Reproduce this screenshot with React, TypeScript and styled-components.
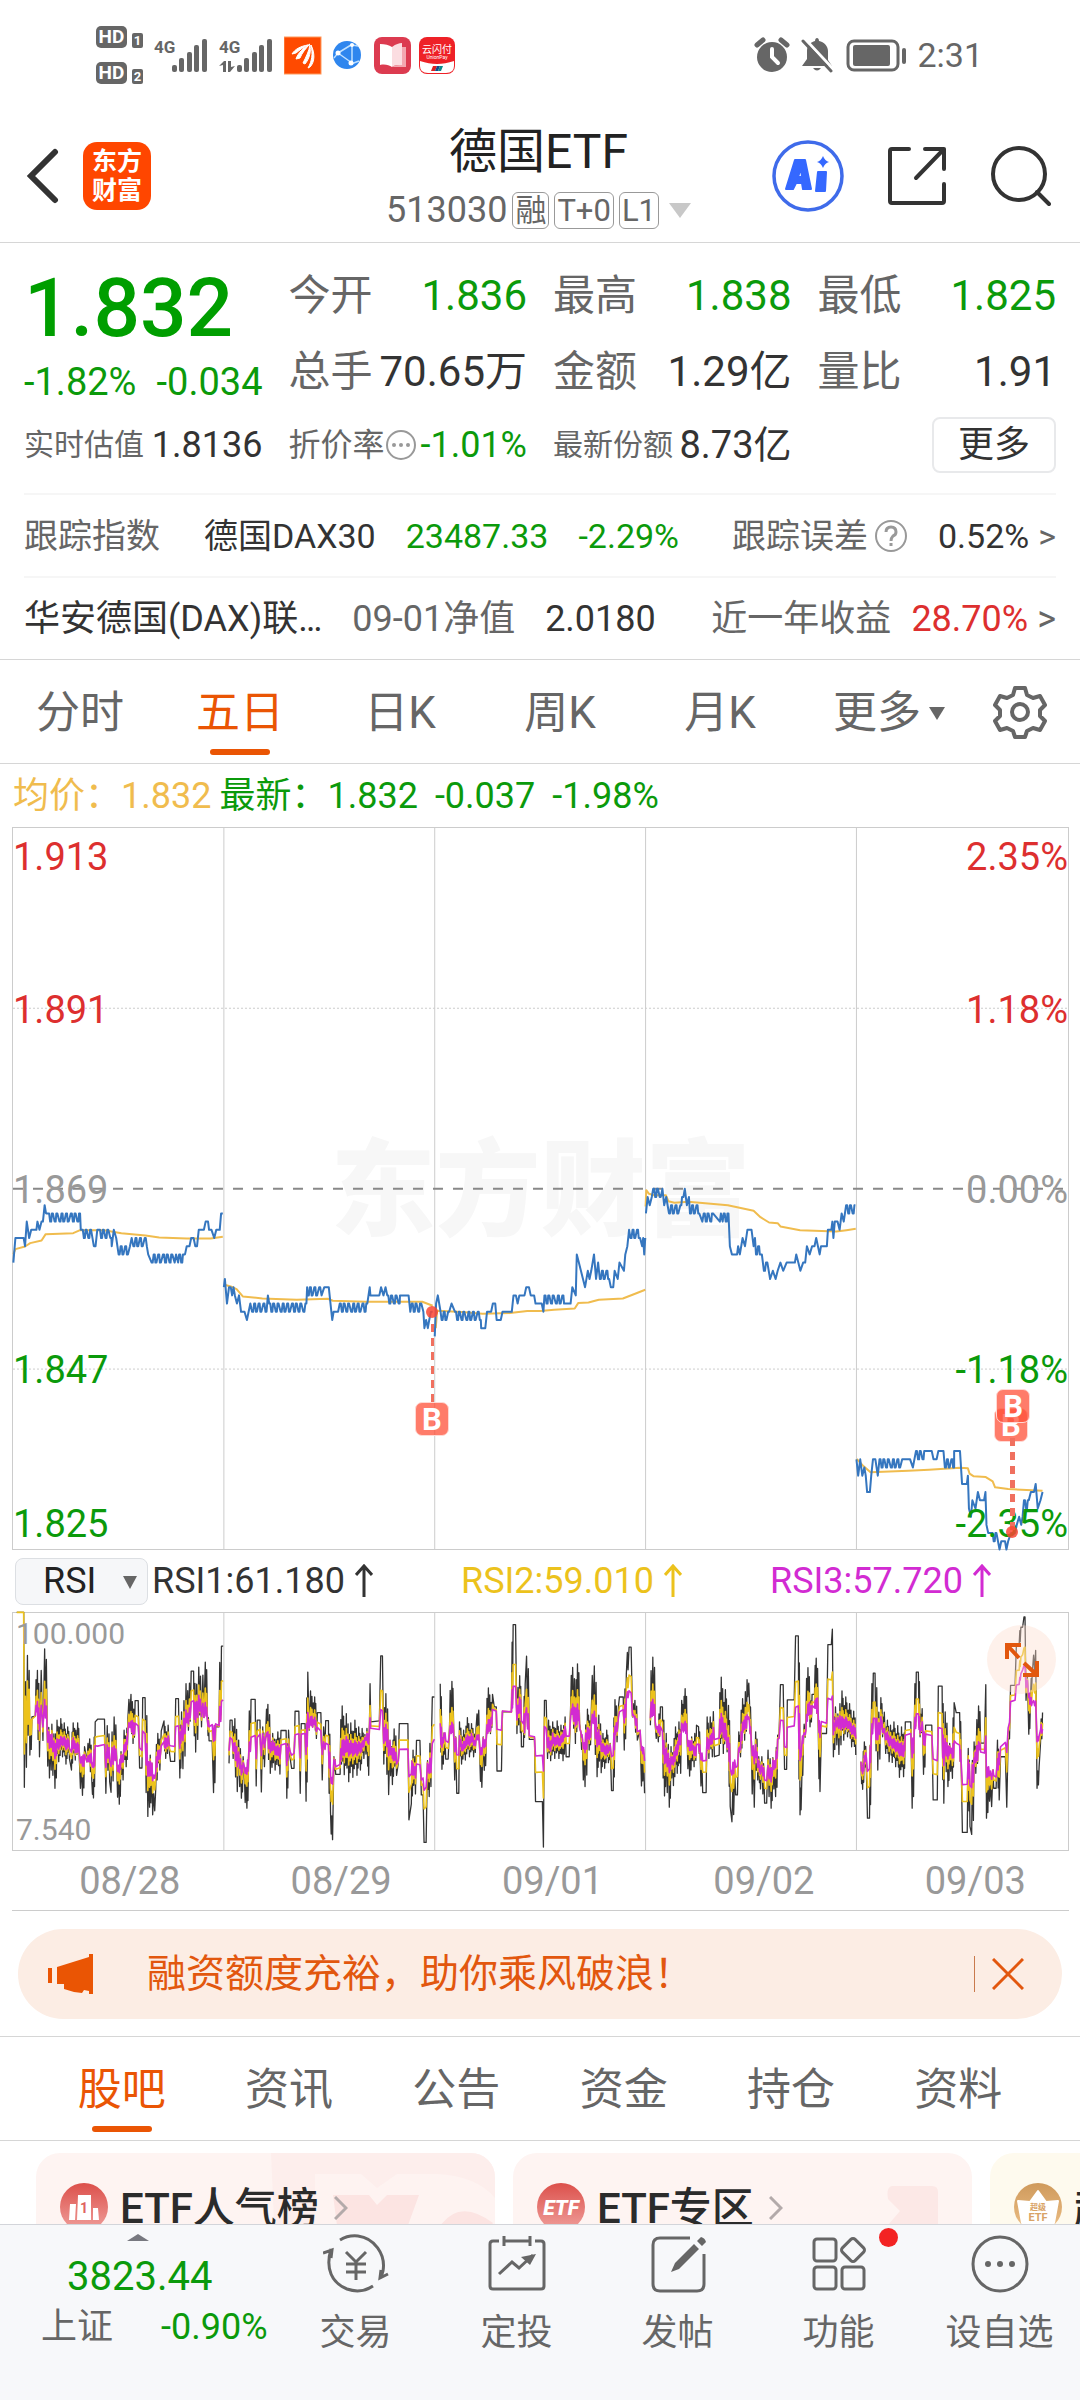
import React from 'react';
import styled, { createGlobalStyle } from 'styled-components';

const C = {
  green: '#0b9a0b',
  red: '#dd2f2f',
  orange: '#ea5504',
  text: '#333333',
  sub: '#666666',
  mute: '#999999',
  line: '#d6d6d6',
  grid: '#cccccc',
  avg: '#f0bc4e',
  blue: '#3576bf',
  rsi2: '#ecc21c',
  rsi3: '#d22bd2',
};

const Global = createGlobalStyle`
  * { box-sizing: border-box; }
  body { margin: 0; background: #fff; color: ${C.text}; font-family: Roboto, 'Noto Sans CJK SC', sans-serif; }
  button, select { font: inherit; color: inherit; background: none; border: 0; padding: 0; margin: 0; }
  a { color: inherit; text-decoration: none; }
  svg { display: block; flex: none; }
  h1, p { margin: 0; font-weight: 400; }
`;

const Screen = styled.div`
  display: flex;
  flex-direction: column;
  height: 100vh;
  overflow: hidden;
`;

/* ---------- status bar ---------- */

const StatusBar = styled.div`
  flex: none;
  height: 110px;
  padding: 0 97px 0 96px;
  display: flex;
  justify-content: space-between;
  color: ${C.sub};
`;
const StatusSide = styled.div<{ $gap: number }>`
  display: flex;
  align-items: center;
  gap: ${(p) => p.$gap}px;
`;
const Sims = styled.div`
  display: grid;
  gap: 14px;
`;
const Sim = styled.div`
  display: flex;
  align-items: flex-end;
  gap: 5px;
  color: #fff;
  font-weight: 700;
`;
const HdTag = styled.span`
  width: 31px;
  height: 22px;
  border-radius: 5px;
  background: ${C.sub};
  font-size: 19px;
  line-height: 22px;
  text-align: center;
`;
const SimNo = styled.span`
  width: 11px;
  height: 15px;
  border-radius: 2px;
  background: ${C.sub};
  font-size: 13px;
  line-height: 15px;
  text-align: center;
`;
const Clock = styled.span`
  font-size: 34px;
  line-height: 40px;
`;

const Signal = ({ data }: { data?: boolean }) => (
  <svg width="54" height="36" viewBox="0 0 54 36" fill={C.sub}>
    <text x="0" y="16" fontSize="17" fontWeight="700" fontFamily="Roboto">4G</text>
    <rect x="18" y="28" width="5" height="7" rx="2" />
    <rect x="25" y="21" width="5" height="14" rx="2" />
    <rect x="33" y="15" width="5" height="20" rx="2" />
    <rect x="40" y="8" width="5" height="27" rx="2" />
    <rect x="48" y="2" width="5" height="33" rx="2" />
    {data && <path d="M0 29l5-5h2v11H4v-7zM9 24h3v6l4-1-5 6H9z" />}
  </svg>
);

const StatusIcons = () => (
  <svg width="172" height="40" viewBox="0 0 172 40">
    <rect x="0" y="2" width="37" height="37" fill="#ff4a00" stroke="#ff9a5c" />
    <path d="M8 19c3-5 9-8 16-9-5 2-8 5-12 8zM12 24c2-6 7-11 14-15-4 4-8 9-10 14zM19 28c3-6 6-12 7-18 1 6 0 13-5 19zM24 33c4-7 5-14 3-23 4 8 4 17-1 22z" fill="#fff" stroke="#fff" strokeWidth="1" />
    <circle cx="63" cy="20" r="14" fill="#2f86ee" />
    <path d="M54 18L67 10M54 18L68 28M68 10V29M50 23c2-2 3-4 4-6M68 10l6 1M67 29l8-3" stroke="#bfe0ff" strokeWidth="1.5" fill="none" />
    <circle cx="54" cy="18" r="2.5" fill="#fff" />
    <circle cx="68" cy="10" r="2" fill="#fff" />
    <circle cx="67" cy="28" r="2.5" fill="#fff" />
    <rect x="90" y="2" width="37" height="37" rx="8" fill="#dc3b50" />
    <path d="M96 9c5 0 9 1 12 3v20c-3-2-7-3-12-2z" fill="#fff" />
    <path d="M108 12c4-3 7-4 10-4v22c-4 0-7 0-10 2z" fill="#fbdde1" />
    <path d="M118 12h4v20h-14c3-2 6-2 10-2z" fill="#f3a7b0" />
    <rect x="135" y="2" width="36" height="37" rx="8" fill="#ee2127" />
    <path d="M136 26c12 4 22 4 34 0v5q0 7-8 7h-18q-8 0-8-7z" fill="#fff" />
    <path d="M149 31h4l-2 5h-4z" fill="#d22" />
    <path d="M153 31h3l-2 5h-3z" fill="#124a8a" />
    <path d="M156 31h3l-2 5h-3z" fill="#0a8a8a" />
    <text x="153" y="18" fontSize="10" fill="#fff" textAnchor="middle" fontFamily="Noto Sans CJK SC">云闪付</text>
    <text x="153" y="24" fontSize="5" fill="#fff" textAnchor="middle" fontFamily="Roboto">UnionPay</text>
  </svg>
);

/* ---------- header ---------- */

const Header = styled.header`
  flex: none;
  height: 133px;
  border-bottom: 1px solid ${C.line};
  padding: 0 29px 0 26px;
  display: grid;
  grid-template-columns: 1fr auto 1fr;
  align-items: center;
`;
const HeadSide = styled.div<{ $end?: boolean }>`
  display: flex;
  align-items: center;
  gap: ${(p) => (p.$end ? 42 : 24)}px;
  justify-content: ${(p) => (p.$end ? 'flex-end' : 'flex-start')};
`;
const IconButton = styled.button`
  display: flex;
  cursor: pointer;
`;
const Logo = styled.a`
  width: 68px;
  height: 68px;
  border-radius: 14px;
  background: #ff4600;
  color: #fff;
  display: flex;
  flex-direction: column;
  align-items: center;
  justify-content: center;
  font-size: 25px;
  line-height: 29px;
  font-weight: 700;
`;
const HeadCentre = styled.div`
  display: flex;
  flex-direction: column;
  align-items: center;
  gap: 8px;
`;
const Title = styled.h1`
  font-size: 48px;
  line-height: 60px;
  color: #222;
`;
const CodeLine = styled.div`
  display: flex;
  align-items: center;
  gap: 5px;
  font-size: 36px;
  line-height: 40px;
  color: ${C.sub};
`;
const Tag = styled.span`
  height: 37px;
  padding: 0 2px;
  border: 1px solid #999;
  border-radius: 6px;
  font-size: 31px;
  line-height: 35px;
`;

/* ---------- quote ---------- */

const Main = styled.main`
  flex: 1;
  min-height: 0;
  overflow: hidden;
`;
const Quote = styled.section`
  padding: 15px 24px 0;
  border-bottom: 1px solid ${C.line};
`;
const QuoteGrid = styled.div`
  display: grid;
  grid-template-columns: repeat(4, minmax(0, 1fr));
  grid-template-rows: 76px 75px 72px;
  column-gap: 26px;
  padding-bottom: 12px;
`;
const PriceCell = styled.div`
  grid-row: span 2;
  padding-top: 8px;
  color: ${C.green};
`;
const Price = styled.div`
  font-size: 82px;
  line-height: 84px;
  font-weight: 500;
  color: #009e00;
`;
const Change = styled.div`
  display: flex;
  justify-content: space-between;
  font-size: 38px;
  line-height: 64px;
`;
const Stat = styled.div`
  display: flex;
  align-items: center;
  justify-content: space-between;
  white-space: nowrap;
`;
const Label = styled.span<{ $size: number }>`
  display: flex;
  align-items: center;
  gap: 1px;
  color: ${C.sub};
  font-size: ${(p) => p.$size}px;
  line-height: 56px;
`;
const Value = styled.span<{ $size: number; $color?: string }>`
  color: ${(p) => p.$color || C.text};
  font-size: ${(p) => p.$size}px;
  line-height: 56px;
`;
const MoreButton = styled.button`
  align-self: center;
  justify-self: end;
  width: 124px;
  height: 56px;
  border: 2px solid #e8e9eb;
  border-radius: 8px;
  font-size: 36px;
  line-height: 48px;
  cursor: pointer;
`;
const LinkRow = styled.a<{ $size: number }>`
  display: flex;
  align-items: center;
  justify-content: space-between;
  height: 83px;
  border-top: 2px solid #f6f6f6;
  font-size: ${(p) => p.$size}px;
  line-height: 56px;
  white-space: nowrap;
`;
const RowGroup = styled.span<{ $gap: number }>`
  display: flex;
  align-items: center;
  gap: ${(p) => p.$gap}px;
`;
const Tint = styled.span<{ $color: string; $min?: number }>`
  color: ${(p) => p.$color};
  min-width: ${(p) => p.$min || 0}px;
`;

/* ---------- tabs ---------- */

const Tabs = styled.nav<{ $pad: number; $cols: string }>`
  display: grid;
  grid-template-columns: ${(p) => p.$cols};
  height: 104px;
  padding: 0 ${(p) => p.$pad}px;
  border-bottom: 1px solid ${C.line};
`;
const Tab = styled.button<{ $on?: boolean; $menu?: boolean }>`
  display: flex;
  align-items: center;
  justify-content: center;
  gap: 8px;
  padding: 3px 0 0 ${(p) => (p.$menu ? 18 : 0)}px;
  font-size: 44px;
  line-height: 64px;
  color: ${(p) => (p.$on ? C.orange : C.sub)};
  position: relative;
  cursor: pointer;
  &::after {
    content: '';
    display: ${(p) => (p.$on ? 'block' : 'none')};
    position: absolute;
    left: 50%;
    bottom: 8px;
    width: 60px;
    height: 6px;
    margin-left: -30px;
    border-radius: 3px;
    background: ${C.orange};
  }
`;
const GearButton = styled(IconButton)`
  align-items: center;
  justify-content: center;
`;
const Legend = styled.div`
  display: flex;
  align-items: center;
  gap: 17px;
  height: 63px;
  padding-left: 13px;
  font-size: 36px;
  line-height: 56px;
  color: ${C.green};
`;
const LegendPair = styled.span`
  display: flex;
  gap: 8px;
`;

/* ---------- charts ---------- */

const Charts = styled.section`
  margin: 0 11px 0 12px;
`;
const Plot = styled.div<{ $height: number }>`
  position: relative;
  height: ${(p) => p.$height}px;
  border: 1px solid ${C.grid};
`;
const PlotLayer = styled.div`
  position: relative;
  height: 100%;
`;
const PlotSvg = styled.svg`
  width: 100%;
  height: 100%;
  overflow: visible;
`;
const AxisText = styled.span<{ $y: number; $color: string; $right?: boolean; $small?: boolean }>`
  position: absolute;
  top: ${(p) => p.$y - 24}px;
  ${(p) => (p.$right ? 'right: 0;' : p.$small ? 'left: 3px;' : 'left: 0;')}
  color: ${(p) => p.$color};
  font-size: ${(p) => (p.$small ? 30 : 38)}px;
  line-height: 48px;
`;
const Watermark = styled.span`
  position: absolute;
  left: 0;
  right: 0;
  top: 304px;
  text-align: center;
  font-size: 105px;
  line-height: 120px;
  font-weight: 900;
  color: #f7f7f7;
`;
const Badge = styled.span<{ $left: number; $top: number }>`
  position: absolute;
  left: ${(p) => p.$left}%;
  top: ${(p) => p.$top}px;
  width: 34px;
  height: 34px;
  margin-left: -17px;
  border: 1px solid #ffd9d4;
  border-radius: 7px;
  background: rgba(255, 80, 56, 0.75);
  color: #fff;
  font-size: 31px;
  line-height: 33px;
  font-weight: 700;
  text-align: center;
`;
const Stem = styled.span<{ $left: number; $top: number; $height: number; $w: number }>`
  position: absolute;
  left: ${(p) => p.$left}%;
  top: ${(p) => p.$top}px;
  height: ${(p) => p.$height}px;
  width: ${(p) => p.$w}px;
  margin-left: ${(p) => -Math.floor(p.$w / 2)}px;
  background: repeating-linear-gradient(to bottom, #f0705f 0 8px, transparent 8px 14px);
`;
const Dot = styled.span<{ $left: number; $top: number }>`
  position: absolute;
  left: ${(p) => p.$left}%;
  top: ${(p) => p.$top - 6}px;
  width: 12px;
  height: 12px;
  margin-left: -6px;
  border-radius: 50%;
  background: rgba(250, 70, 50, 0.85);
`;
const RsiBar = styled.div`
  display: flex;
  align-items: center;
  height: 62px;
  padding-left: 3px;
`;
const SelectBox = styled.label`
  display: flex;
  align-items: center;
  position: relative;
  flex: none;
  width: 133px;
  height: 47px;
  margin-right: 4px;
  border: 1px solid #dcdfe3;
  border-radius: 8px;
  background: #f6f7f9;
  select {
    appearance: none;
    width: 100%;
    height: 45px;
    padding-left: 27px;
    font-size: 36px;
    line-height: 45px;
    color: #222;
  }
  svg {
    position: absolute;
    right: 10px;
    top: 17px;
    pointer-events: none;
  }
`;
const RsiItem = styled.span<{ $color: string }>`
  display: flex;
  align-items: center;
  gap: 10px;
  flex: none;
  width: 309px;
  font-size: 36px;
  line-height: 48px;
  color: ${(p) => p.$color};
  &:last-child {
    width: auto;
  }
`;
const Expand = styled.button`
  position: absolute;
  right: 12px;
  top: 12px;
  width: 69px;
  height: 69px;
  border-radius: 50%;
  background: rgba(252, 220, 205, 0.4);
  display: flex;
  align-items: center;
  justify-content: center;
`;
const Dates = styled.div`
  display: flex;
  height: 60px;
  border-bottom: 1px solid ${C.grid};
  font-size: 38px;
  line-height: 60px;
  color: ${C.mute};
  span {
    flex: 1;
    padding-left: 24px;
    text-align: center;
  }
`;

// Plot space: 3067 units across five sessions, three units to a vertical pixel.
const DAYS = [648, 1261, 1874, 2487];
const LEFT = 35;
const WIDTH = 3067;

// A price run is either "x,level" (ticks below the previous close) or
// "x0-x1,a,b" for a stretch in which the price flickers between two ticks.
const PRICE_RUNS = [
  '36,9 38,8 42,6 66,6 70,7 75,4 82,6 88,5 103,5 106,4 112,5 118,4 122,4 127,2 131,3 137-230,3,4 232,5 235-265,5,6 270,7 275,7 280,5 285-320,5,6 322,7 328,5 335,6 342-370,8,7 375,7 380,6 385-418,7,6 424,7 428,8 438-502,9,8 505,9 509,8 515,9 518-530,8,9 535,8 540,7 548,7 553,6 560,6 565,7 570,7 575,5 590,5 595,4 602,4 605,5 612,5 620,6 626,5 636,5 640,3 645,3',
  '648,12 651,11 657,14 663,12 668,12 672,13 676,12 680,13 686,14 692,13 698,15 708,15 715,16 725,14 730-773,15,14 776,13 780-886,14,15 890,12 892-930,13,12 932,13 940,12 953,12 958,14 963,16 967,15 980,15 985-1068,14,15 1072,12 1074,13 1100,13 1105,12 1112,13 1118,12 1123-1158,13,14 1160,13 1185,13 1190,15 1194-1218,14,15 1222,14 1228,15 1231,17 1236,16 1241,17 1245,16 1250,15 1255,15',
  '1261,18 1265,14 1270,13 1278,15 1281-1302,16,15 1310,14 1320-1392,15,16 1396,17 1408,17 1413,15 1425,15 1430,14 1437,14 1441,16 1453,16 1458,15 1485,15 1490,13 1497,13 1502,14 1507,13 1522,13 1527,12 1535,12 1540,13 1550,13 1554,14 1572,14 1577,15 1580-1640,13,14 1656,14 1661,12 1671,13 1674,8 1680,9 1686,10 1692,11 1698,12 1706,10 1711,11 1716,10 1724,8 1730,11 1736,9 1741-1766,11,10 1773,12 1780,12 1784,10 1793,11 1798,9 1811,10 1815,8 1821,7 1826,5 1830-1854,6,5 1858,6 1864,7 1867,6 1870,8 1873,6',
  '1875,3 1880,1 1886,2 1892,1 1896-1918,0,1 1923,0 1928,2 1934,1 1938,2 1942-1976,3,2 1980,1 1984,1 1988,0 1994,2 2000,1 2003-2034,3,2 2039,4 2043-2070,3,4 2090,4 2093,3 2098,4 2101-2114,3,4 2115,3 2119,7 2125,8 2140,8 2143,7 2148,8 2156,6 2163,7 2170,5 2182,5 2188,7 2192,6 2195-2208,8,7 2212,8 2218-2226,10,9 2228,9 2236,11 2244,10 2252,11 2258,10 2266,9 2274,10 2284,9 2308,9 2312,8 2318,9 2324,10 2332,9 2338,9 2343,7 2351,8 2358,7 2365,7 2370,6 2380,8 2384,7 2401,7 2404,5 2414,5 2417,4 2420,6 2424,4 2432,4 2438,5 2444,3 2450,4 2457-2485,2,3',
  '2487,33 2492,35 2498,33 2504,35 2510,34 2514,35 2518,37 2526,37 2530,35 2535,33 2542,33 2549,35 2554-2623,33,34 2628,33 2643,33 2651,34 2660-2690,32,33 2692,32 2706,32 2711,33 2720,33 2725,32 2740,32 2744-2768,34,33 2771,32 2788,32 2794,36 2808,36 2811,35 2814,39 2820,40 2824,38 2833,39 2840,37 2846,38 2858,38 2862,37 2865,41 2870,42 2880-2898,42,43 2903,44 2908,43 2919,43 2923,44 2928,43 2936,42 2948,42 2953,41 2960,40 2966,41 2970,40 2974-2990,38,39 2994,37 3003,37 3008,36 3014,39 3022,38 3028,37',
];

const AVG_LINES = [
  '36,403 42,388 70,380 85,370 118,362 130,343 210,340 230,331 300,331 350,340 420,347 460,353 540,356 610,356 645,351',
  '650,495 668,500 685,508 703,530 760,536 860,540 950,537 965,543 1060,546 1225,546 1255,558',
  '1264,625 1268,573 1340,577 1400,582 1480,580 1530,574 1568,574 1608,570 1668,566 1678,550 1708,548 1738,540 1808,536 1838,524 1873,510',
  '1874,260 1876,211 1884,222 1898,226 1933,226 1940,244 1958,249 1998,246 2113,256 2188,273 2208,292 2233,308 2258,310 2266,320 2323,331 2428,335 2458,331 2485,327',
  '2488,1018 2508,1040 2528,1058 2638,1053 2698,1050 2788,1044 2811,1046 2816,1062 2828,1070 2863,1072 2883,1085 2890,1103 2928,1108 3028,1113',
];

const tickY = (level: number) => 207 + level * 24.6;

function priceLine(runs: string): string {
  const out: string[] = [];
  runs.split(' ').forEach((run) => {
    const [span, a, b] = run.split(',');
    if (b === undefined) {
      out.push(`${span},${tickY(+a)}`);
      return;
    }
    const [from, to] = span.split('-').map(Number);
    let high = true;
    let i = 0;
    for (let x = from; x <= to; x += [6, 5, 8, 5, 9][i++ % 5]) {
      const y = tickY(high ? +a : +b);
      out.push(`${x},${y}`, `${x + 3},${y}`);
      high = !high;
    }
  });
  return out.join(' ');
}

const RSI_LINES = [
  '46,215 66,215 68,742 77,345 84,645 90,530 100,528 106,390 112,650 127,325 134,535 141,714 148,552 157,745 163,540 168,665 174,535 179,650 184,548 189,672 194,560 199,655 205,690 210,548 216,660 223,548 228,660 237,766 243,620 250,665 258,596 264,720 269,774 274,545 281,537 301,537 305,760 309,556 316,725 320,757 329,530 337,690 344,793 349,635 355,720 358,570 364,680 369,535 378,462 384,610 390,481 399,481 403,684 410,684 412,472 419,472 427,830 434,645 441,825 450,745 456,580 462,690 466,572 474,542 479,655 486,555 490,640 493,664 505,664 508,475 516,475 520,714 525,515 529,686 538,430 545,570 553,392 560,392 566,636 575,380 583,560 594,365 600,520 605,602 614,602 618,758 624,560 634,560 641,317 646,317',
  '663,670 666,540 672,540 675,655 680,535 687,755 691,600 699,775 704,650 708,720 715,805 720,650 727,477 739,477 742,738 745,540 753,540 757,756 761,560 766,680 770,565 776,492 783,700 790,580 797,690 805,575 811,702 814,571 829,571 831,775 836,570 840,650 845,685 852,685 855,513 866,513 870,760 873,550 884,550 887,784 892,395 896,570 900,452 906,560 912,470 917,595 920,517 930,517 934,720 938,560 942,620 944,541 952,541 958,815 964,900 968,650 973,703 986,703 992,497 998,704 1004,520 1011,725 1017,548 1023,712 1029,540 1035,706 1040,560 1045,690 1050,565 1055,655 1064,565 1069,706 1073,430 1075,545 1100,542 1104,346 1109,346 1113,672 1119,460 1127,764 1131,600 1138,734 1143,566 1150,706 1155,670 1158,550 1183,550 1186,840 1193,792 1198,630 1205,762 1208,601 1218,601 1222,765 1227,765 1230,908 1236,908 1240,662 1245,770 1252,570 1254,470 1260,470',
  '1277,430 1282,688 1288,580 1293,657 1300,657 1304,560 1311,423 1316,560 1325,760 1331,760 1333,545 1339,672 1345,570 1350,660 1356,532 1362,650 1368,550 1374,650 1381,565 1389,510 1392,650 1398,742 1402,590 1405,691 1411,600 1417,443 1423,580 1429,462 1434,500 1440,500 1442,693 1455,693 1458,515 1484,515 1489,252 1496,252 1500,580 1508,406 1513,620 1519,620 1524,430 1528,347 1536,598 1551,598 1554,785 1574,785 1577,922 1580,480 1585,480 1589,655 1592,540 1598,662 1604,545 1610,655 1617,542 1622,655 1628,555 1634,662 1640,530 1643,650 1652,650 1656,500 1662,381 1670,610 1676,370 1682,550 1686,580 1691,640 1698,740 1705,507 1710,630 1716,520 1725,376 1733,710 1738,525 1745,698 1750,580 1755,685 1761,570 1766,668 1771,610 1775,752 1780,752 1785,478 1791,605 1795,500 1798,470 1809,470 1812,630 1818,400 1826,320 1832,320 1836,530 1843,480 1850,600 1858,570 1862,738 1868,640 1871,760',
  '1888,555 1895,350 1902,555 1911,605 1917,500 1923,500 1929,768 1934,580 1943,802 1948,620 1955,737 1961,560 1966,700 1971,545 1976,700 1979,480 1984,560 1989,445 1995,600 2002,708 2008,590 2015,680 2022,555 2028,560 2033,660 2040,758 2050,758 2053,530 2058,655 2062,530 2068,650 2071,514 2074,650 2088,645 2094,410 2100,640 2106,448 2111,635 2115,495 2120,800 2125,846 2133,700 2136,765 2141,765 2145,575 2150,650 2156,475 2162,600 2169,418 2176,482 2181,600 2190,802 2194,575 2200,720 2203,650 2208,747 2212,650 2220,790 2226,790 2230,630 2239,805 2244,653 2252,770 2258,585 2262,585 2266,433 2274,433 2278,688 2284,688 2286,479 2306,479 2310,286 2318,286 2323,825 2328,725 2333,600 2340,540 2346,382 2352,560 2358,462 2365,462 2370,353 2376,560 2381,755 2385,580 2400,580 2404,312 2414,312 2417,266 2420,650 2426,500 2436,643 2445,452 2450,600 2456,470 2461,590 2467,490 2473,620 2479,513 2485,645',
  '2500,665 2505,748 2510,605 2516,700 2519,835 2525,835 2530,560 2536,398 2541,398 2549,690 2558,472 2563,590 2568,516 2572,640 2577,540 2582,665 2586,555 2591,667 2596,545 2601,680 2607,556 2612,712 2618,560 2624,710 2629,545 2645,545 2649,805 2655,570 2661,395 2667,395 2672,590 2678,505 2682,703 2688,555 2706,555 2710,780 2722,780 2725,437 2736,437 2741,790 2745,515 2753,740 2758,610 2766,715 2771,487 2777,517 2787,517 2792,700 2795,878 2809,878 2812,625 2817,860 2822,884 2829,605 2834,700 2842,497 2848,609 2859,609 2863,433 2865,835 2871,720 2880,800 2884,690 2886,745 2893,745 2897,600 2902,780 2906,650 2920,650 2924,802 2928,596 2932,596 2935,435 2948,435 2952,312 2960,312 2965,260 2970,260 2974,229 2977,229 2980,480 2984,410 2988,582 2993,470 2998,400 3008,330 3012,745 3018,680 3022,610 3028,517',
];

// Adds the minute-by-minute reversals between two turning points.
function flicker(pts: number[][]): number[][] {
  return pts.flatMap(([x, y], i) => {
    const next = pts[i + 1];
    if (!next || next[0] - x < 5 || Math.abs(next[1] - y) < 50) return [[x, y]];
    const gap = next[0] - x;
    const dy = next[1] - y;
    return [[x, y], [x + gap * 0.35, y + dy * 0.8], [x + gap * 0.65, y + dy * 0.15]];
  });
}

// Slower RSI periods keep the fast line's rhythm but pull it towards its local mean.
function rsiLine(line: string, k: number, from = 0): string {
  const pts = flicker(line.split(' ').map((p) => p.split(',').map(Number)));
  return pts
    .map(([x, y], i) => {
      const near = pts.slice(Math.max(0, i - 9), i + 10);
      const mean = near.reduce((s, p) => s + p[1], 0) / near.length;
      const base = mean * 0.8 + 610 * 0.2;
      return [x, x < 67 ? y : base + (y - base) * k];
    })
    .filter(([x]) => x >= from)
    .map(([x, y]) => `${x.toFixed(0)},${y.toFixed(0)}`)
    .join(' ');
}

const Line = ({ points, color, w = 1 }: { points: string; color: string; w?: number }) => (
  <polyline points={points} fill="none" stroke={color} strokeWidth={w} strokeLinejoin="round" vectorEffect="non-scaling-stroke" />
);

const PriceChart = () => (
  <PlotSvg viewBox={`${LEFT} -876 ${WIDTH} 2164`} preserveAspectRatio="none">
    {DAYS.map((x) => (
      <line key={x} x1={x} x2={x} y1="-876" y2="1288" stroke={C.grid} vectorEffect="non-scaling-stroke" />
    ))}
    {[-335, 748].map((y) => (
      <line key={y} x1={LEFT} x2={LEFT + WIDTH} y1={y} y2={y} stroke="#cccccc" strokeDasharray="2 2" vectorEffect="non-scaling-stroke" />
    ))}
    <line x1={LEFT} x2={LEFT + WIDTH} y1="207" y2="207" stroke="#888" strokeWidth="2" strokeDasharray="10 10" vectorEffect="non-scaling-stroke" />
    {AVG_LINES.map((p) => <Line key={p} points={p} color={C.avg} w={2} />)}
    {PRICE_RUNS.map((p) => <Line key={p} points={priceLine(p)} color={C.blue} w={2} />)}
  </PlotSvg>
);

const RsiChart = () => (
  <PlotSvg viewBox={`${LEFT} 217 ${WIDTH} 714`} preserveAspectRatio="none">
    {DAYS.map((x) => (
      <line key={x} x1={x} x2={x} y1="217" y2="931" stroke={C.grid} vectorEffect="non-scaling-stroke" />
    ))}
    {RSI_LINES.map((p) => <Line key={p} points={rsiLine(p, 1)} color="#333" w={1.3} />)}
    {RSI_LINES.map((p) => <Line key={p} points={rsiLine(p, 0.55)} color={C.rsi2} w={1.6} />)}
    {RSI_LINES.map((p, i) => <Line key={p} points={rsiLine(p, 0.3, i ? 0 : 95)} color={C.rsi3} w={1.6} />)}
  </PlotSvg>
);

const UpArrow = () => (
  <svg width="18" height="34" viewBox="0 0 18 34" fill="none" stroke="currentColor" strokeWidth="3">
    <path d="M9 33V3M1 11l8-9 8 9" />
  </svg>
);

/* ---------- banner, cards ---------- */

const Banner = styled.div`
  display: flex;
  align-items: center;
  height: 90px;
  margin: 18px 18px 17px;
  padding: 0 38px 0 30px;
  border-radius: 45px;
  background: #fcede4;
  color: #e2570e;
  font-size: 39px;
  line-height: 56px;
`;
const BannerText = styled.a`
  flex: 1;
  margin-left: 53px;
`;
const BannerRule = styled.span`
  width: 1px;
  height: 36px;
  margin-right: 17px;
  background: #c97a4c;
`;
const BannerWrap = styled.div`
  display: flow-root;
  border-bottom: 1px solid ${C.line};
`;
const Cards = styled.div`
  display: flex;
  gap: 18px;
  padding: 12px 0 0 36px;
  overflow: hidden;
`;
const Card = styled.a<{ $bg: string }>`
  position: relative;
  flex: none;
  width: 459px;
  height: 180px;
  padding: 30px 0 0 24px;
  border-radius: 24px;
  overflow: hidden;
  background: ${(p) => p.$bg};
  display: flex;
  align-items: flex-start;
`;
const CardTitle = styled.span`
  position: relative;
  margin: 0 15px 0 12px;
  font-size: 42px;
  line-height: 52px;
  font-weight: 500;
  color: #2b2b2b;
  white-space: nowrap;
`;
const CardArt = styled.svg`
  position: absolute;
  right: 0;
  top: 0;
`;
const CardIcon = styled.svg`
  position: relative;
`;
const CardChevron = styled.svg`
  position: relative;
  margin-top: 13px;
`;

const Chevron = () => (
  <CardChevron width="14" height="24" viewBox="0 0 14 24" fill="none" stroke="#b3aaaa" strokeWidth="3">
    <path d="M1 1l11 11L1 23" />
  </CardChevron>
);

/* ---------- bottom bar ---------- */

const BottomBar = styled.nav`
  flex: none;
  display: grid;
  grid-template-columns: 275fr repeat(5, 161fr);
  height: 176px;
  border-top: 1px solid #d3d5da;
  background: #f7f8fa;
  color: ${C.sub};
`;
const IndexBox = styled.a`
  display: flex;
  flex-direction: column;
  padding: 9px 0 0 41px;
`;
const IndexValue = styled.span`
  padding-left: 26px;
  font-size: 40px;
  line-height: 48px;
  margin-top: 12px;
  color: ${C.green};
`;
const IndexLine = styled.span`
  display: flex;
  gap: 48px;
  font-size: 36px;
  line-height: 52px;
`;
const Action = styled.button`
  display: flex;
  flex-direction: column;
  align-items: center;
  position: relative;
  padding-top: 7px;
  font-size: 36px;
  line-height: 52px;
  gap: 13px;
  cursor: pointer;
`;
const RedDot = styled.i`
  position: absolute;
  left: 50%;
  top: 3px;
  width: 19px;
  height: 19px;
  margin-left: 40px;
  border-radius: 50%;
  background: #f32323;
`;

const ActionSvg = ({ children }: { children: React.ReactNode }) => (
  <svg width="66" height="62" viewBox="0 0 66 62" fill="none" stroke={C.sub} strokeWidth="3">{children}</svg>
);

const Triangle = ({ w, h, color }: { w: number; h: number; color: string }) => (
  <svg width={w} height={h} viewBox="0 0 10 10" preserveAspectRatio="none" fill={color}><path d="M0 0h10L5 10z" /></svg>
);

const FoldButton = styled(IconButton)`
  margin-left: 5px;
`;

const STATS: [string, string, string?][] = [
  ['今开', '1.836', C.green],
  ['最高', '1.838', C.green],
  ['最低', '1.825', C.green],
  ['总手', '70.65万'],
  ['金额', '1.29亿'],
  ['量比', '1.91'],
];

const AXIS: [number, string, string, string][] = [
  [29, '1.913', '2.35%', C.red],
  [182, '1.891', '1.18%', C.red],
  [362, '1.869', '0.00%', C.mute],
  [542, '1.847', '-1.18%', C.green],
  [696, '1.825', '-2.35%', C.green],
];

export default function App() {
  return (
    <Screen>
      <Global />
      <StatusBar>
        <StatusSide $gap={11}>
          <Sims>
            <Sim><HdTag>HD</HdTag><SimNo>1</SimNo></Sim>
            <Sim><HdTag>HD</HdTag><SimNo>2</SimNo></Sim>
          </Sims>
          <Signal />
          <Signal data />
          <StatusIcons />
        </StatusSide>
        <StatusSide $gap={11}>
          <svg width="36" height="36" viewBox="0 0 36 36" fill={C.sub}>
            <circle cx="18" cy="20" r="15" />
            <path d="M3 8l6-5M33 8l-6-5" stroke={C.sub} strokeWidth="5" strokeLinecap="round" />
            <path d="M18 12v8l6 6" stroke="#fff" strokeWidth="4" fill="none" strokeLinecap="round" />
          </svg>
          <svg width="32" height="36" viewBox="0 0 32 36" fill={C.sub}>
            <path d="M1 29l5-7v-8c0-6 4-9 8-10 0-4 4-4 4 0 5 1 9 5 9 10v9l4 6zM12 31h8q-4 5-8 0z" />
            <path d="M4 2L32 32" stroke="#fff" strokeWidth="3" />
            <path d="M2 4L30 34" stroke={C.sub} strokeWidth="3" strokeLinecap="round" />
          </svg>
          <svg width="62" height="36" viewBox="0 0 62 36" fill="none">
            <rect x="4" y="4" width="50" height="29" rx="6" stroke={C.sub} strokeWidth="3" />
            <rect x="9" y="8" width="37" height="21" rx="2" fill={C.sub} />
            <rect x="58" y="11" width="4" height="16" rx="2" fill={C.sub} />
          </svg>
          <Clock>2:31</Clock>
        </StatusSide>
      </StatusBar>

      <Header>
        <HeadSide>
          <IconButton aria-label="返回">
            <svg width="33" height="56" viewBox="0 0 33 56" fill="none" stroke="#333" strokeWidth="6" strokeLinecap="round">
              <path d="M29 4L5 28l24 24" />
            </svg>
          </IconButton>
          <Logo href="#home"><span>东方</span><span>财富</span></Logo>
        </HeadSide>
        <HeadCentre>
          <Title>德国ETF</Title>
          <CodeLine>
            <span>513030</span>
            <Tag>融</Tag>
            <Tag>T+0</Tag>
            <Tag>L1</Tag>
            <FoldButton aria-label="展开"><Triangle w={22} h={15} color="#c8c8c8" /></FoldButton>
          </CodeLine>
        </HeadCentre>
        <HeadSide $end>
          <IconButton aria-label="AI">
            <svg width="74" height="74" viewBox="0 0 74 74">
              <circle cx="37" cy="37" r="34" fill="none" stroke="#3f6bea" strokeWidth="3.5" />
              <g fill="#3568ff" stroke="#3568ff" strokeWidth="2" strokeLinejoin="round">
                <path fillRule="evenodd" d="M24 21h10l6 29h-8l-1-6h-6l-3 6h-7zM30 29l-3 9h4z" />
                <path d="M47 33h8l-1 19h-9z" />
                <path strokeWidth="0" d="M52 17q2 5 6 6-4 1-6 6-2-5-6-6 4-1 6-6z" />
              </g>
            </svg>
          </IconButton>
          <IconButton aria-label="分享">
            <svg width="60" height="60" viewBox="0 0 60 60" fill="none" stroke="#333" strokeWidth="4" strokeLinecap="round" strokeLinejoin="round">
              <path d="M22 3H5q-2 0-2 2v50q0 2 2 2h50q2 0 2-2V38M38 3h19v20M57 3L29 32" />
            </svg>
          </IconButton>
          <IconButton aria-label="搜索">
            <svg width="62" height="62" viewBox="0 0 62 62" fill="none" stroke="#333" strokeWidth="4" strokeLinecap="round">
              <circle cx="30" cy="29" r="26" />
              <path d="M48 47l12 12" />
            </svg>
          </IconButton>
        </HeadSide>
      </Header>

      <Main>
        <Quote>
          <QuoteGrid>
            <PriceCell>
              <Price>1.832</Price>
              <Change><span>-1.82%</span><span>-0.034</span></Change>
            </PriceCell>
            {STATS.map(([k, v, c]) => (
              <Stat key={k}><Label $size={42}>{k}</Label><Value $size={42} $color={c}>{v}</Value></Stat>
            ))}
            <Stat><Label $size={30}>实时估值</Label><Value $size={36}>1.8136</Value></Stat>
            <Stat>
              <Label $size={32}>
                折价率
                <svg width="30" height="30" viewBox="0 0 30 30">
                  <circle cx="15" cy="15" r="14" fill="none" stroke="#999" strokeWidth="2" />
                  <g fill="#999"><circle cx="8" cy="15" r="2" /><circle cx="15" cy="15" r="2" /><circle cx="22" cy="15" r="2" /></g>
                </svg>
              </Label>
              <Value $size={36} $color={C.green}>-1.01%</Value>
            </Stat>
            <Stat><Label $size={30}>最新份额</Label><Value $size={38}>8.73亿</Value></Stat>
            <MoreButton>更多</MoreButton>
          </QuoteGrid>
          <LinkRow href="#index" $size={34}>
            <RowGroup $gap={30}>
              <RowGroup $gap={0}><Tint $color={C.sub} $min={180}>跟踪指数</Tint>德国DAX30</RowGroup>
              <Tint $color={C.green}>23487.33</Tint>
              <Tint $color={C.green}>-2.29%</Tint>
            </RowGroup>
            <RowGroup $gap={30}>
              <RowGroup $gap={6}>
                <Tint $color={C.sub}>跟踪误差</Tint>
                <svg width="34" height="34" viewBox="0 0 34 34" fill="none" stroke="#999" strokeWidth="2">
                  <circle cx="17" cy="17" r="15" />
                  <path d="M12 13q0-5 5-5t5 5q0 3-3 4-2 2-2 5M17 24v3" strokeWidth="3" />
                </svg>
              </RowGroup>
              <RowGroup $gap={9}>0.52%<Tint $color={C.sub}>&gt;</Tint></RowGroup>
            </RowGroup>
          </LinkRow>
          <LinkRow href="#fund" $size={36}>
            <RowGroup $gap={30}>
              <span>华安德国(DAX)联…</span>
              <Tint $color={C.sub}>09-01净值</Tint>
              <span>2.0180</span>
            </RowGroup>
            <RowGroup $gap={20}>
              <Tint $color={C.sub}>近一年收益</Tint>
              <RowGroup $gap={9}><Tint $color={C.red}>28.70%</Tint><Tint $color={C.sub}>&gt;</Tint></RowGroup>
            </RowGroup>
          </LinkRow>
        </Quote>

        <Tabs $pad={0} $cols="repeat(6, 4fr) 3fr">
          <Tab>分时</Tab>
          <Tab $on>五日</Tab>
          <Tab>日K</Tab>
          <Tab>周K</Tab>
          <Tab>月K</Tab>
          <Tab $menu>更多<Triangle w={16} h={13} color={C.sub} /></Tab>
          <GearButton aria-label="设置">
            <svg width="54" height="54" viewBox="0 0 54 54" fill="none" stroke={C.sub} strokeWidth="4" strokeLinejoin="round">
              <path d="M22 3h10l2 7 6 3 7-2 5 9-5 5v6l5 5-5 9-7-2-6 3-2 6H22l-2-6-6-3-7 2-5-9 5-5v-6l-5-5 5-9 7 2 6-3z" />
              <circle cx="27" cy="27" r="8" />
            </svg>
          </GearButton>
        </Tabs>

        <Legend>
          <LegendPair>
            <Tint $color={C.avg}>均价：1.832</Tint>
            <span>最新：1.832</span>
          </LegendPair>
          <span>-0.037</span>
          <span>-1.98%</span>
        </Legend>

        <Charts>
          <Plot $height={723}>
            <Watermark>东方财富</Watermark>
            <PlotLayer><PriceChart /></PlotLayer>
            {AXIS.map(([y, l, , c]) => <AxisText key={l} $y={y} $color={c}>{l}</AxisText>)}
            {AXIS.map(([y, , r, c]) => <AxisText key={r} $y={y} $color={c} $right>{r}</AxisText>)}
            <Dot $left={39.7} $top={484} />
            <Stem $left={39.7} $top={496} $height={79} $w={3} />
            <Badge $left={39.7} $top={574}>B</Badge>
            <Badge $left={94.6} $top={580}>B</Badge>
            <Badge $left={94.8} $top={561}>B</Badge>
            <Stem $left={94.7} $top={610} $height={92} $w={5} />
            <Dot $left={94.7} $top={704} />
          </Plot>

          <RsiBar>
            <SelectBox>
              <select aria-label="指标" defaultValue="RSI"><option>RSI</option></select>
              <Triangle w={14} h={13} color={C.sub} />
            </SelectBox>
            <RsiItem $color={C.text}>RSI1:61.180<UpArrow /></RsiItem>
            <RsiItem $color={C.rsi2}>RSI2:59.010<UpArrow /></RsiItem>
            <RsiItem $color={C.rsi3}>RSI3:57.720<UpArrow /></RsiItem>
          </RsiBar>

          <Plot $height={239}>
            <RsiChart />
            <AxisText $y={21} $color={C.mute} $small>100.000</AxisText>
            <AxisText $y={217} $color={C.mute} $small>7.540</AxisText>
            <Expand aria-label="放大">
              <svg width="34" height="34" viewBox="0 0 34 34" fill="none" stroke="#e2570e" strokeWidth="4">
                <path d="M2 16V2h14M2 2l12 13M18 32h14V18M32 32L19 20" />
              </svg>
            </Expand>
          </Plot>
          <Dates>
            {['08/28', '08/29', '09/01', '09/02', '09/03'].map((d) => <span key={d}>{d}</span>)}
          </Dates>
        </Charts>

        <BannerWrap>
          <Banner>
            <svg width="46" height="40" viewBox="0 0 46 40" fill={C.orange}>
              <path d="M0 14h4v15H0zM9 13L41 3V0h4v40h-4v-3l-5-1-2 3-8-1-10-3v-5H9z" />
            </svg>
            <BannerText href="#margin">融资额度充裕，助你乘风破浪！</BannerText>
            <BannerRule />
            <IconButton aria-label="关闭">
              <svg width="32" height="32" viewBox="0 0 32 32" fill="none" stroke="#e2570e" strokeWidth="3"><path d="M1 1l30 30M31 1L1 31" /></svg>
            </IconButton>
          </Banner>
        </BannerWrap>

        <Tabs $pad={38} $cols="repeat(6, 1fr)">
          <Tab $on>股吧</Tab>
          <Tab>资讯</Tab>
          <Tab>公告</Tab>
          <Tab>资金</Tab>
          <Tab>持仓</Tab>
          <Tab>资料</Tab>
        </Tabs>

        <Cards>
          <Card href="#rank" $bg="#fef4f2">
            <CardArt width="224" height="180" viewBox="0 0 224 180">
              <path d="M0 0h224v180H8z" fill="#fdeeec" />
              <path d="M44 21h46l16 14 20-14h40q40 2 58 24v135H44z" fill="#fef3f1" />
              <path d="M62 42h36l8 10 10-10h32l-16 44h30q20-46 60-16l-20 30v80H80z" fill="#fce4e2" />
            </CardArt>
            <CardIcon width="48" height="48" viewBox="0 0 48 48">
              <defs><linearGradient id="rg" x2="0" y2="1"><stop stopColor="#dc504b" /><stop offset="1" stopColor="#f0a09c" /></linearGradient></defs>
              <circle cx="24" cy="24" r="24" fill="url(#rg)" />
              <path d="M10 21h6l-1 16H9zM18 12h13v25H17zM33 25h5l1 12h-6z" fill="#fff" />
              <text x="24" y="30" fontSize="14" fontWeight="700" fill="#e0645f" textAnchor="middle" fontFamily="Roboto">1</text>
            </CardIcon>
            <CardTitle>ETF人气榜</CardTitle>
            <Chevron />
          </Card>
          <Card href="#zone" $bg="#fef4f2">
            <CardArt width="90" height="180" viewBox="0 0 90 180">
              <path d="M10 33h40q6 0 6 6v41H6V72l12-14L6 46q-2-12 4-13z" fill="#fce8e6" />
            </CardArt>
            <CardIcon width="48" height="48" viewBox="0 0 48 48">
              <circle cx="24" cy="24" r="24" fill="url(#rg)" />
              <text x="24" y="32" fontSize="21" fontWeight="900" fontStyle="italic" fill="#fff" textAnchor="middle" fontFamily="Roboto">ETF</text>
            </CardIcon>
            <CardTitle>ETF专区</CardTitle>
            <Chevron />
          </Card>
          <Card href="#super" $bg="#fefaee">
            <CardIcon width="48" height="48" viewBox="0 0 48 48">
              <defs><linearGradient id="gg" x2="0" y2="1"><stop stopColor="#cf9a5c" /><stop offset="1" stopColor="#edbf86" /></linearGradient></defs>
              <circle cx="24" cy="24" r="24" fill="url(#gg)" />
              <path d="M4 18l12 1 8-11 8 11 12-1-4 22H8z" fill="#fff" strokeLinejoin="round" stroke="#fff" strokeWidth="2" />
              <text x="24" y="27" fontSize="8" fontWeight="700" fill="#d9a366" textAnchor="middle" fontFamily="Noto Sans CJK SC">超级</text>
              <text x="24" y="38" fontSize="11" fontWeight="700" fill="#d9a366" textAnchor="middle" fontFamily="Roboto">ETF</text>
            </CardIcon>
            <CardTitle>超级ETF</CardTitle>
          </Card>
        </Cards>
      </Main>

      <BottomBar>
        <IndexBox href="#sh">
          <svg width="194" height="7" viewBox="0 0 194 7" fill="#77787f"><path d="M86 7L97 0l11 7z" /></svg>
          <IndexValue>3823.44</IndexValue>
          <IndexLine><span>上证</span><Tint $color={C.green}>-0.90%</Tint></IndexLine>
        </IndexBox>
        <Action>
          <ActionSvg>
            <path d="M17 8q8-5 18-4c16 2 28 18 25 35-1 4-2 6-2 6M50 54q-12 8-26 3C9 51 2 37 8 17M0 21l9-3-1 8M65 42l-8 4 1-8" />
            <path d="M23 20l10 10 10-10M33 30v18M23 32h20M23 40h20" />
          </ActionSvg>
          交易
        </Action>
        <Action>
          <ActionSvg>
            <path d="M15 9H9q-3 0-3 3v42q0 3 3 3h48q3 0 3-3V12q0-3-3-3h-6M21 9h24M20 4v10M46 4v10" />
            <path d="M15 42l13-12 7 6 14-13" />
            <path d="M37 25l15-3-6 11z" fill={C.sub} stroke="none" />
          </ActionSvg>
          定投
        </Action>
        <Action>
          <ActionSvg>
            <path d="M45 6H15q-7 0-7 7v39q0 7 7 7h37q7 0 7-7V22" />
            <path d="M26 40l4-9 19-19 5 5-20 20zM52 9l4-4q4 1 5 5l-4 4z" fill={C.sub} stroke="none" />
          </ActionSvg>
          发帖
        </Action>
        <Action>
          <RedDot />
          <ActionSvg>
            <rect x="8" y="7" width="22" height="22" rx="3" />
            <rect x="8" y="35" width="22" height="22" rx="3" />
            <rect x="36" y="35" width="22" height="22" rx="3" />
            <rect x="38" y="9" width="18" height="18" rx="3" transform="rotate(45 47 18)" />
          </ActionSvg>
          功能
        </Action>
        <Action>
          <ActionSvg>
            <circle cx="33" cy="32" r="27" />
            <g fill={C.sub} stroke="none"><circle cx="21" cy="32" r="3" /><circle cx="33" cy="32" r="3" /><circle cx="45" cy="32" r="3" /></g>
          </ActionSvg>
          设自选
        </Action>
      </BottomBar>
    </Screen>
  );
}
